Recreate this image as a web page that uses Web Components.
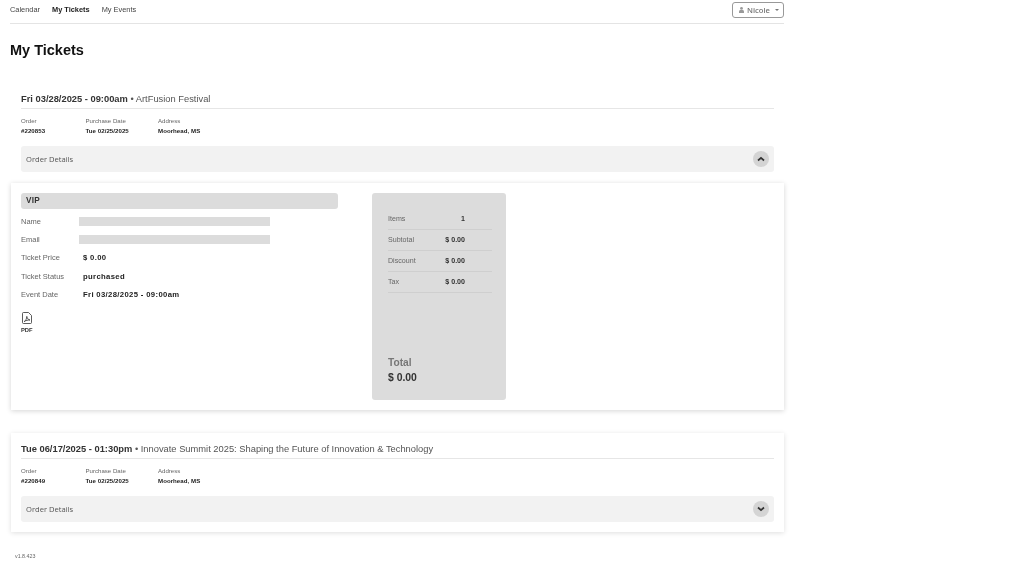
<!DOCTYPE html>
<html>
<head>
<meta charset="utf-8">
<title>My Tickets</title>
<style>
    html, body { margin: 0; background: #fff; }
    body { font-family: "Liberation Sans", Arial, sans-serif; color: #222; }
</style>
</head>
<body>
<tickets-page>
    <ticket-card date="Fri 03/28/2025 - 09:00am" event="ArtFusion Festival" order="#220853" purchased="Tue 02/25/2025" address="Moorhead, MS" open>
        <ticket-detail>
            <detail-row label="Name" blank></detail-row>
            <detail-row label="Email" blank></detail-row>
            <detail-row label="Ticket Price">$ 0.00</detail-row>
            <detail-row label="Ticket Status">purchased</detail-row>
            <detail-row label="Event Date">Fri 03/28/2025 - 09:00am</detail-row>
            <order-summary slot="summary">
                <summary-row label="Items" value="1"></summary-row>
                <summary-row label="Subtotal" value="$ 0.00"></summary-row>
                <summary-row label="Discount" value="$ 0.00"></summary-row>
                <summary-row label="Tax" value="$ 0.00"></summary-row>
            </order-summary>
        </ticket-detail>
    </ticket-card>
    <ticket-card date="Tue 06/17/2025 - 01:30pm" event="Innovate Summit 2025: Shaping the Future of Innovation &amp; Technology" order="#220849" purchased="Tue 02/25/2025" address="Moorhead, MS"></ticket-card>
</tickets-page>

<script>
const pageTemplate = document.createElement("template");
pageTemplate.innerHTML = /*html*/`
    <style>
    :host { display: block; width: 784px; height: 576px; padding-left: 10px; box-sizing: border-box; filter: blur(.4px); }
    nav { display: flex; align-items: flex-start; justify-content: space-between; height: 23px; border-bottom: 1px solid #e4e4e4; }
    .links { display: flex; gap: 12px; padding-top: 4.5px; font-size: 7.4px; line-height: 10px; color: #444; }
    .links b { color: #222; }
    h1 { margin: 17px 0 0; font-size: 14.5px; line-height: 19px; font-weight: bold; color: #111; }
    .list { display: flex; flex-direction: column; gap: 23px; margin: 23px 0 0 1px; }
    .version { margin: 20px 0 0 5px; font-size: 5.3px; line-height: 8px; color: #666; }
    button { display: flex; align-items: center; gap: 3px; width: 52px; height: 16px; margin-top: 2px; padding: 0 0 0 6px; box-sizing: border-box; background: #fff; border: 1px solid #999; border-radius: 3px; font: 600 7.6px "Open Sans", sans-serif; color: #777; }
    button i { border: 2.2px solid transparent; border-top-color: #777; border-bottom: 0; margin-left: 2px; }
    </style>
    <nav>
        <div class="links"><span>Calendar</span><b>My Tickets</b><span>My Events</span></div>
        <button>
            <svg width="5" height="6" viewBox="0 0 5 6" fill="#999"><circle cx="2.5" cy="1.4" r="1.4"/><path d="M0 6V4.4C0 3.4.9 3 2.5 3S5 3.4 5 4.4V6z"/></svg>
            Nicole<i></i>
        </button>
    </nav>
    <h1>My Tickets</h1>
    <div class="list"><slot></slot></div>
    <div class="version">v1.8.423</div>`;

class TicketsPage extends HTMLElement {
    connectedCallback() {
        this.attachShadow({ mode: "open" });
        this.shadowRoot.appendChild(pageTemplate.content.cloneNode(true));
    }
}

const cardTemplate = document.createElement("template");
cardTemplate.innerHTML = /*html*/`
    <style>
    :host { display: block; }
    .head { padding: 10px; background: #fff; }
    :host([open]) .head { padding-bottom: 11px; }
    :host(:not([open])) .head { box-shadow: 0 1px 5px rgba(0,0,0,.13); }
    h2 { margin: 0; padding-bottom: 3px; border-bottom: 1px solid #e6e6e6; font-size: 9.33px; line-height: 12px; font-weight: normal; color: #555; }
    h2 b { color: #333; }
    .meta { display: flex; margin-top: 7px; font-size: 6.1px; line-height: 10px; color: #666; }
    .meta div { width: 64.5px; }
    .meta div + div { width: 72.5px; }
    .meta b { display: block; color: #222; letter-spacing: .05px; }
    .bar { display: flex; align-items: center; justify-content: space-between; height: 26px; margin-top: 10px; padding: 0 5px; background: #f2f2f2; border-radius: 3px; font: 7.6px "Open Sans", sans-serif; color: #555; }
    .toggle { display: flex; align-items: center; justify-content: center; width: 16px; height: 16px; border-radius: 50%; background: #d4d4d4; }
    </style>
    <div class="head">
        <h2><b id="date"></b> • <span id="event"></span></h2>
        <div class="meta">
            <div>Order<b id="order"></b></div>
            <div>Purchase Date<b id="purchased"></b></div>
            <div>Address<b id="address"></b></div>
        </div>
        <div class="bar">Order Details
            <span class="toggle"><svg width="8" height="6" viewBox="0 0 8 6" fill="none" stroke="#333" stroke-width="1.7"><path id="chevron" d=""/></svg></span>
        </div>
    </div>
    <slot></slot>`;

class TicketCard extends HTMLElement {
    connectedCallback() {
        this.attachShadow({ mode: "open" });
        this.shadowRoot.appendChild(cardTemplate.content.cloneNode(true));
        for (const key of ["date", "event", "order", "purchased", "address"]) {
            this.shadowRoot.getElementById(key).textContent = this.getAttribute(key);
        }
        this.shadowRoot.getElementById("chevron").setAttribute("d", this.hasAttribute("open") ? "M1 4.5 4 1.8 7 4.5" : "M1 1.5 4 4.2 7 1.5");
    }
}

const detailTemplate = document.createElement("template");
detailTemplate.innerHTML = /*html*/`
    <style>
    :host { display: flex; gap: 34px; height: 227px; padding: 10px; box-sizing: border-box; background: #fff; box-shadow: 0 1px 5px rgba(0,0,0,.17); }
    .left { width: 317px; }
    .type { height: 16px; padding-left: 5px; background: #dcdcdc; border-radius: 3px; font-size: 8.2px; line-height: 16px; font-weight: bold; color: #333; letter-spacing: .3px; }
    .rows { display: flex; flex-direction: column; gap: 9.2px; margin-top: 8px; }
    .pdf { margin-top: 13px; font-size: 5.8px; line-height: 8px; font-weight: bold; color: #333; }
    .pdf svg { display: block; margin: 0 0 2px 1px; }
    </style>
    <div class="left">
        <div class="type">VIP</div>
        <div class="rows"><slot></slot></div>
        <div class="pdf">
            <svg width="10" height="12" viewBox="0 0 10 12" fill="none" stroke="#333" stroke-width=".8"><path d="M1.5.5H6.5L9.5 3.5V10.5A1 1 0 0 1 8.5 11.5H1.5A1 1 0 0 1 .5 10.5V1.5A1 1 0 0 1 1.5.5Z"/><path d="M2.2 9.6C3.6 8.8 4.8 6.6 4.8 4.4 5.2 6.6 6.2 7.6 8 8 6 8 3.8 8.4 2.2 9.6Z"/></svg>
            PDF
        </div>
    </div>
    <slot name="summary"></slot>`;

class TicketDetail extends HTMLElement {
    connectedCallback() {
        this.attachShadow({ mode: "open" });
        this.shadowRoot.appendChild(detailTemplate.content.cloneNode(true));
    }
}

const rowTemplate = document.createElement("template");
rowTemplate.innerHTML = /*html*/`
    <style>
    :host { display: flex; align-items: center; height: 9px; font-size: 7.5px; color: #666; }
    .label { width: 62px; flex: none; }
    .value { font-size: 7.7px; font-weight: bold; color: #222; letter-spacing: .35px; }
    .blank { width: 191px; height: 9px; margin-left: -4px; background: #dcdcdc; }
    </style>
    <span class="label"></span><span class="value"><slot></slot></span>`;

class DetailRow extends HTMLElement {
    connectedCallback() {
        this.attachShadow({ mode: "open" });
        this.shadowRoot.appendChild(rowTemplate.content.cloneNode(true));
        this.shadowRoot.querySelector(".label").textContent = this.getAttribute("label");
        if (this.hasAttribute("blank")) this.shadowRoot.querySelector(".value").className = "blank";
    }
}

const summaryTemplate = document.createElement("template");
summaryTemplate.innerHTML = /*html*/`
    <style>
    :host { display: flex; flex-direction: column; width: 134px; height: 207px; padding: 16px 14px 15px 16px; box-sizing: border-box; background: #dcdcdc; border-radius: 3px; }
    .total { margin-top: auto; font-size: 10.2px; line-height: 15px; font-weight: bold; color: #777; }
    .total b { display: block; font-size: 10.4px; color: #333; }
    </style>
    <slot></slot>
    <div class="total">Total<b>$ 0.00</b></div>`;

class OrderSummary extends HTMLElement {
    connectedCallback() {
        this.attachShadow({ mode: "open" });
        this.shadowRoot.appendChild(summaryTemplate.content.cloneNode(true));
    }
}

const summaryRowTemplate = document.createElement("template");
summaryRowTemplate.innerHTML = /*html*/`
    <style>
    :host { display: flex; align-items: center; height: 21px; padding-bottom: 1px; border-bottom: 1px solid #cfcfcf; box-sizing: border-box; font-size: 7.1px; color: #666; }
    .label { width: 57px; }
    .value { width: 20px; text-align: right; font-weight: bold; color: #333; white-space: nowrap; }
    </style>
    <span class="label"></span><span class="value"></span>`;

class SummaryRow extends HTMLElement {
    connectedCallback() {
        this.attachShadow({ mode: "open" });
        this.shadowRoot.appendChild(summaryRowTemplate.content.cloneNode(true));
        this.shadowRoot.querySelector(".label").textContent = this.getAttribute("label");
        this.shadowRoot.querySelector(".value").textContent = this.getAttribute("value");
    }
}

customElements.define("tickets-page", TicketsPage);
customElements.define("ticket-card", TicketCard);
customElements.define("ticket-detail", TicketDetail);
customElements.define("detail-row", DetailRow);
customElements.define("order-summary", OrderSummary);
customElements.define("summary-row", SummaryRow);
</script>
</body>
</html>
